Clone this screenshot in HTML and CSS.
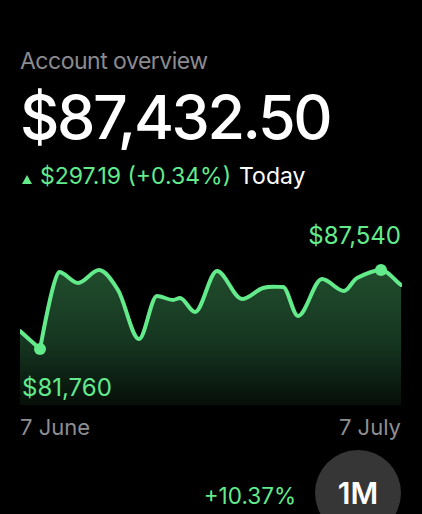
FILE: index.html
```html
<!DOCTYPE html>
<html lang="en">
<head>
<meta charset="utf-8">
<link rel="stylesheet" href="styles.css">
</head>
<body>
<main class="screen">
  <div class="title">Account overview</div>
  <div class="balance">$87,432.50</div>
  <div class="change">
    <span class="tri"></span>
    <span class="up">$297.19 (+0.34%)</span>
    <span class="today">Today</span>
  </div>
  <div class="max-label">$87,540</div>
  <div class="chart">
    <svg class="chart-svg" width="382" height="150" viewBox="0 0 382 150">
      <defs>
        <linearGradient id="fillg" gradientUnits="userSpaceOnUse" x1="0" y1="15" x2="0" y2="150">
          <stop offset="0" stop-color="#214d2d"/>
          <stop offset="0.55" stop-color="#153520"/>
          <stop offset="1" stop-color="#060f08"/>
        </linearGradient>
      </defs>
      <path fill="url(#fillg)" d="M0,76 L20,94 C26,62 35,17 39,17 C45.3,17 51.7,28 58,28 C65,28 72,15 79,15 C85.3,15 91.7,24.9 98,35 C105,46.2 112,84 119,84 C125,84 131,41 137,41 C142.3,41 147.7,45 153,45 C155.3,45 157.7,43 160,43 C165,43 170,57 175,57 C182.3,57 189.7,16 197,16 C205.3,16 213.7,44 222,44 C229,44 236,35.1 243,33 C249.7,31 256.3,32 263,32 C268,32 273,61 278,61 C286,61 294,24 302,24 C309.3,24 316.7,36 324,36 C328.3,36 332.7,25.2 337,23 C345,19 353,15 361,15 C367.7,15 374.3,25 381,30 L381,150 L0,150 Z"/>
      <path fill="none" stroke="#63ea8b" stroke-width="4" stroke-linejoin="round" stroke-linecap="round" d="M0,76 L20,94 C26,62 35,17 39,17 C45.3,17 51.7,28 58,28 C65,28 72,15 79,15 C85.3,15 91.7,24.9 98,35 C105,46.2 112,84 119,84 C125,84 131,41 137,41 C142.3,41 147.7,45 153,45 C155.3,45 157.7,43 160,43 C165,43 170,57 175,57 C182.3,57 189.7,16 197,16 C205.3,16 213.7,44 222,44 C229,44 236,35.1 243,33 C249.7,31 256.3,32 263,32 C268,32 273,61 278,61 C286,61 294,24 302,24 C309.3,24 316.7,36 324,36 C328.3,36 332.7,25.2 337,23 C345,19 353,15 361,15 C367.7,15 374.3,25 381,30"/>
      <circle cx="20" cy="94" r="6" fill="#63ea8b"/>
      <circle cx="361" cy="15" r="6" fill="#63ea8b"/>
    </svg>
    <div class="min-label">$81,760</div>
  </div>
  <div class="dates">
    <span>7 June</span>
    <span>7 July</span>
  </div>
  <div class="bottom">
    <span class="period-change">+10.37%</span>
    <span class="period">1M</span>
  </div>
</main>
</body>
</html>
```

FILE: styles.css
```css
html, body {
  margin: 0;
  padding: 0;
  background: #000;
}
body {
  font-family: "Inter", "Liberation Sans", sans-serif;
  color: #fff;
  width: 422px;
  height: 514px;
  overflow: hidden;
}
.screen {
  padding: 49px 21px 0 20px;
}
.title {
  font-size: 23px;
  line-height: 24px;
  letter-spacing: -0.5px;
  color: #8b8b8f;
}
.balance {
  margin-top: 13px;
  font-size: 61px;
  line-height: 62px;
  font-weight: 500;
  letter-spacing: -2.4px;
}
.change {
  margin-top: 17px;
  font-size: 23px;
  line-height: 23px;
  display: flex;
  align-items: baseline;
}
.tri {
  width: 0;
  height: 0;
  border-left: 5px solid transparent;
  border-right: 5px solid transparent;
  border-bottom: 9px solid #63ea8b;
  margin: 0 8px 5px 2px;
}
.up {
  color: #63ea8b;
}
.today {
  margin-left: 8px;
}
.max-label {
  margin-top: 35px;
  font-size: 24px;
  line-height: 24px;
  color: #63ea8b;
  text-align: right;
}
.chart {
  position: relative;
  margin-top: 7px;
  height: 150px;
}
.chart-svg {
  display: block;
}
.min-label {
  position: absolute;
  left: 2px;
  top: 121px;
  font-size: 24px;
  line-height: 24px;
  color: #63ea8b;
}
.dates {
  margin-top: 11px;
  display: flex;
  justify-content: space-between;
  font-size: 22px;
  line-height: 22px;
  color: #8e8e93;
}
.bottom {
  margin-top: 12px;
  display: flex;
  justify-content: flex-end;
  align-items: baseline;
  gap: 19px;
}
.period-change {
  font-size: 22.5px;
  color: #63ea8b;
}
.period {
  display: inline-flex;
  justify-content: center;
  align-items: center;
  width: 86px;
  height: 86px;
  border-radius: 50%;
  background: #363636;
  font-size: 30px;
  font-weight: 600;
  color: #fff;
}
```
